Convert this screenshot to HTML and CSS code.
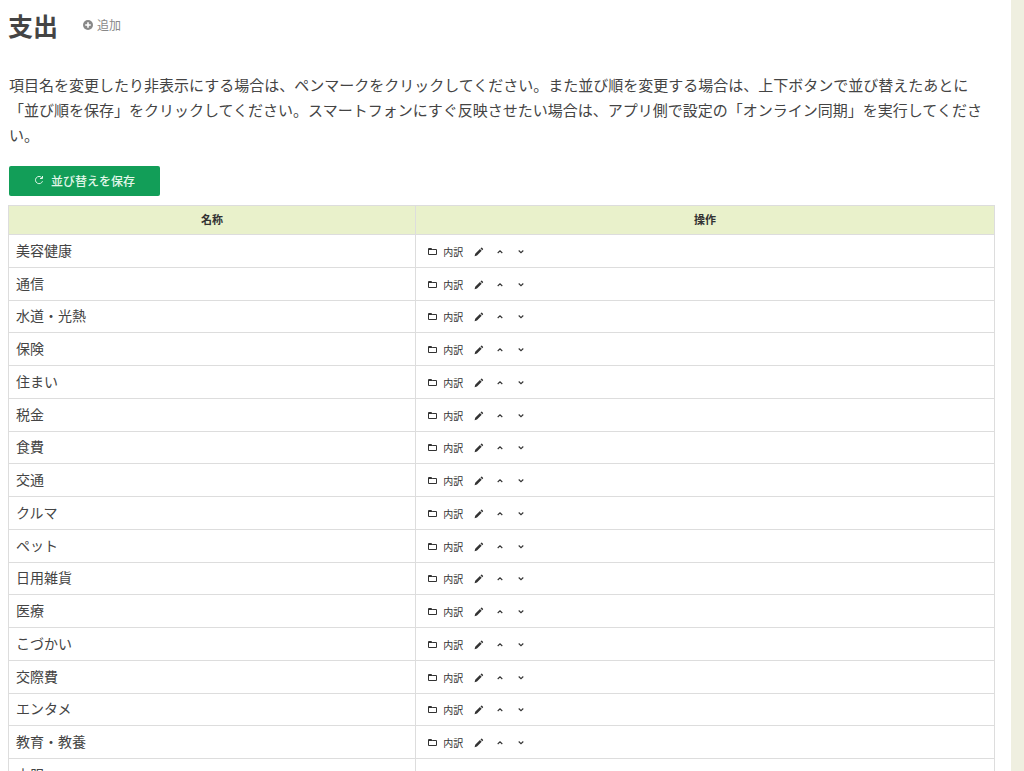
FILE: index.html
```html
<!DOCTYPE html>
<html lang="ja">
<head>
  <meta charset="UTF-8" />
  <meta name="viewport" content="width=device-width, initial-scale=1" />
  <title>支出</title>
  <link rel="stylesheet" href="styles.css">
</head>
<body>
  <svg class="sprite" aria-hidden="true">
    <symbol id="icon-folder" viewBox="0 0 10 10"><path d="M.5 7.500v-6h3l1 1h4v5zM.5 2.500h4" fill="none" stroke="currentColor"/></symbol>
    <symbol id="icon-pencil" viewBox="0 0 10 10"><path d="M.6 9.300l.6-2.600L5.900 2l1.800 1.800L3 8.500zM6.500 1.400l.7-.7q.4-.3.8 0l1 1q.3.400 0 .8l-.7.700z" fill="currentColor"/></symbol>
    <symbol id="icon-up" viewBox="0 0 10 10"><path d="M2.700 6L5 3.800l2.300 2.200" fill="none" stroke="currentColor" stroke-width="1.100"/></symbol>
    <symbol id="icon-down" viewBox="0 0 10 10"><path d="M2.700 3.500L5 5.700l2.300-2.200" fill="none" stroke="currentColor" stroke-width="1.100"/></symbol>
  </svg>
  <main>
    <header>
      <h1>支出</h1>
      <a class="add" href="#add">
        <svg viewBox="0 0 10 10" aria-hidden="true"><circle cx="5" cy="5" r="5" fill="currentColor"/><path d="M5 2.200v5.600M2.200 5h5.600" stroke="#fff" stroke-width="1.600"/></svg>
        追加
      </a>
    </header>
    <p class="guide">項目名を変更したり非表示にする場合は、ペンマークをクリックしてください。また並び順を変更する場合は、上下ボタンで並び替えたあとに「並び順を保存」をクリックしてください。スマートフォンにすぐ反映させたい場合は、アプリ側で設定の「オンライン同期」を実行してください。</p>
    <button type="button" class="save">
      <svg viewBox="0 0 10 10" aria-hidden="true"><path d="M8.500 6.200A3.600 3.600 0 1 1 7.800 2.700M8.500 1v2.500H6" fill="none" stroke="currentColor"/></svg>
      並び替えを保存
    </button>
    <table>
      <thead>
        <tr><th class="name">名称</th><th>操作</th></tr>
      </thead>
      <tbody id="categories"></tbody>
    </table>
  </main>
  <script src="script.js"></script>
</body>
</html>
```

FILE: styles.css
```css
* {
  box-sizing: border-box;
}
body {
  margin: 0;
  background: #efefe0;
  color: #444;
  font-family: "Noto Sans CJK JP", sans-serif;
  font-size: 15px;
}
.sprite {
  display: none;
}
main {
  margin-right: 13px;
  min-height: 100vh;
  padding: 8px 16px 24px 8px;
  background: #fff;
}
header {
  display: flex;
  align-items: center;
  gap: 25px;
  height: 35px;
}
h1 {
  margin: 0;
  font-size: 25px;
  font-weight: 700;
  line-height: 35px;
}
a {
  color: inherit;
  text-decoration: none;
}
.add {
  display: flex;
  align-items: center;
  gap: 4px;
  padding-bottom: 2px;
  color: #888;
  font-size: 12px;
  line-height: 16px;
}
svg {
  width: 10px;
  height: 10px;
  flex: none;
}
.guide {
  margin: 29px 0 19px;
  padding-left: 1px;
  line-height: 25px;
}
.save {
  display: flex;
  align-items: center;
  justify-content: center;
  gap: 7px;
  width: 151px;
  height: 30px;
  margin: 0 1px 9px;
  padding: 0 0 2px;
  border: none;
  border-radius: 2px;
  background: #129e58;
  color: #e3f7ea;
  font-family: inherit;
  font-size: 12px;
  font-weight: 500;
  cursor: pointer;
}
table {
  width: 100%;
  border-collapse: collapse;
  table-layout: fixed;
}
th, td {
  border: 1px solid #ddd;
  padding: 0 7px 3px;
}
th {
  height: 29px;
  background: #e9f1cb;
  color: #333;
  font-size: 11px;
  font-weight: 700;
  line-height: 16px;
}
.name {
  width: 41.3%;
}
td {
  height: 33px;
  font-size: 14px;
  line-height: 20px;
}
tr:nth-child(4n+3) td {
  height: 32px;
}
.actions {
  display: flex;
  align-items: center;
  gap: 11px;
  padding: 4px 0 0 5px;
  color: #333;
  font-size: 10px;
  line-height: 16px;
}
.actions a {
  display: flex;
  align-items: center;
  gap: 5px;
}
.actions button {
  display: flex;
  padding: 0;
  border: none;
  background: none;
  color: inherit;
  cursor: pointer;
}
```

FILE: script.js
```js
(function(){
  const categories = ['美容健康', '通信', '水道・光熱', '保険', '住まい', '税金', '食費', '交通', 'クルマ', 'ペット', '日用雑貨', '医療', 'こづかい', '交際費', 'エンタメ', '教育・教養', '衣服'];
  const icon = name => `<svg aria-hidden="true"><use href="#icon-${name}"/></svg>`;

  document.getElementById('categories').innerHTML = categories.map(name => `
    <tr>
      <td>${name}</td>
      <td>
        <div class="actions">
          <a href="#detail">${icon('folder')}内訳</a>
          <a href="#edit" aria-label="編集">${icon('pencil')}</a>
          <button type="button" aria-label="上へ">${icon('up')}</button>
          <button type="button" aria-label="下へ">${icon('down')}</button>
        </div>
      </td>
    </tr>`).join('');
})();
```
